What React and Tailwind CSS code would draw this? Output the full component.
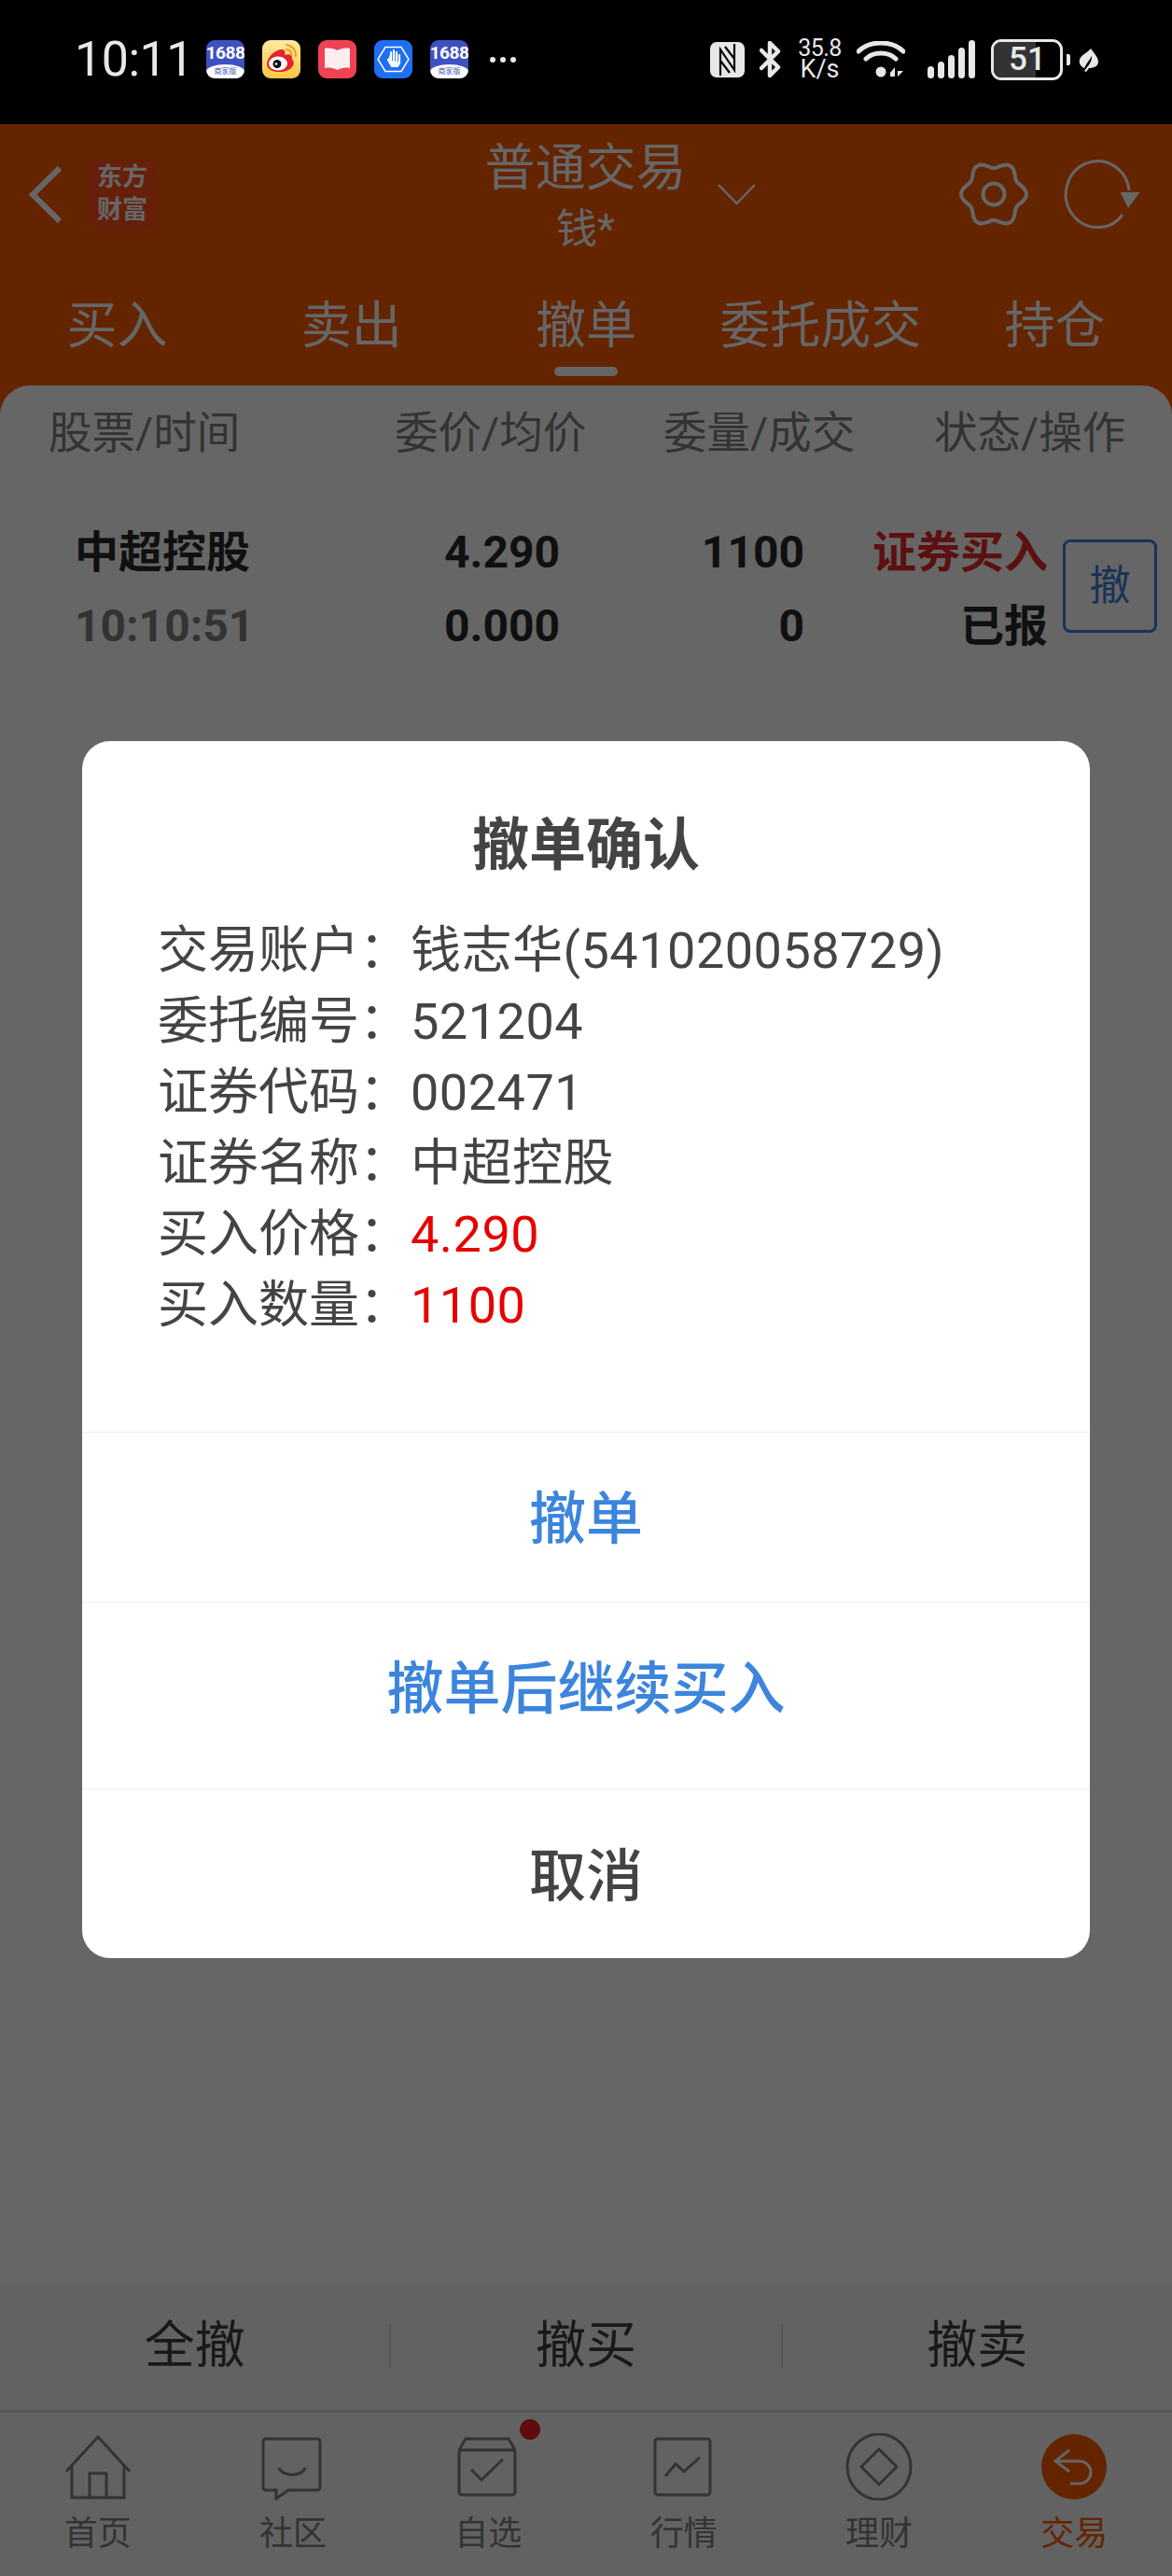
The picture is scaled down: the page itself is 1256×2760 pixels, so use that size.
import React from 'react'

const tabs = ['买入', '卖出', '撤单', '委托成交', '持仓']

const details = [
  { label: '交易账户：', value: '钱志华(541020058729)' },
  { label: '委托编号：', value: '521204' },
  { label: '证券代码：', value: '002471' },
  { label: '证券名称：', value: '中超控股' },
  { label: '买入价格：', value: '4.290', red: true },
  { label: '买入数量：', value: '1100', red: true },
]

const gearPath = () => {
  const pts = []
  for (let i = 0; i < 120; i++) {
    const t = (i / 120) * Math.PI * 2
    const r = 31.5 + 3.5 * Math.cos(6 * t)
    pts.push(`${(38 + r * Math.cos(t)).toFixed(1)} ${(36 + r * Math.sin(t)).toFixed(1)}`)
  }
  return `M${pts.join('L')}Z`
}

const Icon1688 = () => (
  <div className="relative w-[41px] h-[41px] rounded-[9px] overflow-hidden bg-[#3f51c0] flex flex-col items-center">
    <span className="text-white text-[19px] font-bold leading-[20px] mt-[4px] tracking-[-0.5px]">1688</span>
    <div className="absolute left-0 right-0 bottom-0 h-[15px] bg-white rounded-t-[50%] flex justify-center">
      <span className="text-[#3f51c0] text-[8px] leading-[15px]">商家版</span>
    </div>
  </div>
)

const IconWeibo = () => (
  <svg width="41" height="41" viewBox="0 0 41 41">
    <defs>
      <linearGradient id="wb" x1="0" y1="0" x2="0" y2="1">
        <stop offset="0" stopColor="#ffeaa0" />
        <stop offset="1" stopColor="#ffc640" />
      </linearGradient>
    </defs>
    <rect width="41" height="41" rx="9" fill="url(#wb)" />
    <path d="M5 26 C5 18 14 10 21 10 C25 10 25 14 24 16 C29 14 33 16 32 21 C36 23 34 33 20 34 C11 34.500 5 31 5 26Z" fill="#e6202c" />
    <ellipse cx="17" cy="25" rx="10" ry="7.500" fill="#fff" />
    <circle cx="16" cy="25.500" r="4.500" fill="#111" />
    <circle cx="15" cy="25.500" r="1.300" fill="#fff" />
    <path d="M26 5 C32 6 36 10 36 17 M26 10 C29 10 31 12 31.500 16" fill="none" stroke="#f09a1a" strokeWidth="2" strokeLinecap="round" />
  </svg>
)

const IconBook = () => (
  <svg width="41" height="41" viewBox="0 0 41 41">
    <rect width="41" height="41" rx="9" fill="#ef4354" />
    <path d="M7 9 C12 8 17 9 20.500 11 C24 9 29 8 34 9 V30 C29 29 24 30 20.500 32 C17 30 12 29 7 30Z" fill="#ffeef0" />
  </svg>
)

const IconHand = () => (
  <svg width="41" height="41" viewBox="0 0 41 41">
    <rect width="41" height="41" rx="9" fill="#1f6ff2" />
    <path d="M12 7.500 H29 L37 20.500 L29 33.500 H12 L4 20.500Z" fill="none" stroke="#fff" strokeWidth="1.500" />
    <path d="M15 21 L18 24 V13 M21 27 V11 M24 13 V24 M24 15 M27 16 V25 M15 21 L19 28 H25 L27 24" fill="#fff" stroke="#fff" strokeWidth="2.200" strokeLinecap="round" strokeLinejoin="round" />
  </svg>
)

const StatusRight = () => (
  <div className="flex items-center h-full text-[#e8e8e8]">
    <svg width="37" height="38" viewBox="0 0 37 38" className="mt-[-6px]">
      <rect width="37" height="38" rx="7" fill="currentColor" />
      <path d="M11 36 V8 L26 30 V2 M16 5 L26 18 M11 20 L21 33" stroke="#000" strokeWidth="2.200" fill="none" />
    </svg>
    <svg width="25" height="39" viewBox="0 0 25 39" className="ml-[16px] mt-[-6px]">
      <path d="M2 10 L20 28 L11 37 V2 L20 11 L2 29" fill="none" stroke="currentColor" strokeWidth="4.500" strokeLinejoin="round" strokeLinecap="round" />
    </svg>
    <div className="ml-[14px] w-[51px] mt-[-6px] flex flex-col items-center">
      <span className="text-[25px] leading-[20px] tracking-[-0.5px]">35.8</span>
      <span className="text-[27px] leading-[24px]">K/s</span>
    </div>
    <svg width="52" height="39" viewBox="0 0 52 39" className="ml-[14px] mt-[-6px]">
      <path d="M2 11 C14 -1 38 -1 50 11 M10 19 C18 11 34 11 42 19" fill="none" stroke="currentColor" strokeWidth="5" strokeLinecap="round" />
      <circle cx="26" cy="33" r="5.500" fill="currentColor" />
      <path d="M36 34 L41 28 V38 H36Z M44 28 V38 L50 32 H44Z" fill="currentColor" />
    </svg>
    <svg width="51" height="41" viewBox="0 0 51 41" className="ml-[24px] mt-[-6px]">
      <rect x="0" y="28" width="7" height="13" rx="3.500" fill="currentColor" />
      <rect x="11" y="23" width="7" height="18" rx="3.500" fill="currentColor" />
      <rect x="22" y="16" width="7" height="25" rx="3.500" fill="currentColor" />
      <rect x="33" y="8" width="7" height="33" rx="3.500" fill="currentColor" />
      <rect x="44" y="0" width="7" height="41" rx="3.500" fill="currentColor" />
    </svg>
    <div className="ml-[17px] mt-[-6px] relative w-[77px] h-[44px] rounded-[11px] border-[3px] border-[#e8e8e8] overflow-hidden flex items-center justify-center">
      <div className="absolute left-0 top-0 bottom-0 w-[45px] bg-[#333333]" />
      <span className="relative text-[35px] font-medium leading-none ml-[1px] text-[#e8e8e8]">51</span>
    </div>
    <div className="ml-[4px] mt-[-6px] w-[4px] h-[12px] rounded-r-[2px] bg-[#e8e8e8]" />
    <svg width="21" height="25" viewBox="0 0 21 25" className="ml-[9px] mt-[-4px]">
      <path d="M13 0 C16 5 21 9 21 14 C21 19 16 21 11 21 L8 25 L6 24 L9 20 C14 14 14 11 14 8 C12 12 8 16 6 21 C2 19 0 16 1 12 C2 7 9 5 13 0Z" fill="currentColor" />
    </svg>
  </div>
)

const StatusBar = () => (
  <div className="relative z-20 h-[133px] bg-black flex items-center justify-between pl-[80px] pr-[79px]">
    <div className="flex items-center h-full">
      <span className="text-[#e8e8e8] text-[52px] leading-none w-[141px] mt-[-6px] tracking-[-0.5px]">10:11</span>
      <div className="flex gap-[19px] mt-[-6px]">
        <Icon1688 />
        <IconWeibo />
        <IconBook />
        <IconHand />
        <Icon1688 />
      </div>
      <div className="flex gap-[5px] ml-[23px] mt-[-6px]">
        <span className="w-[6px] h-[6px] rounded-full bg-[#e8e8e8]" />
        <span className="w-[6px] h-[6px] rounded-full bg-[#e8e8e8]" />
        <span className="w-[6px] h-[6px] rounded-full bg-[#e8e8e8]" />
      </div>
    </div>
    <StatusRight />
  </div>
)

const Header = () => (
  <div className="bg-[#fa5a00] h-[296px] text-white">
    <div className="h-[150px] flex items-center">
      <svg width="37" height="63" viewBox="0 0 37 63" className="ml-[30px]">
        <path d="M34 3 L5 31.500 L34 60" fill="none" stroke="currentColor" strokeWidth="6" />
      </svg>
      <div className="ml-[27px] w-[74px] h-[75px] rounded-[12px] bg-[#ff4f19] flex flex-col items-center justify-center font-bold text-[27px] leading-[35px]">
        <span>东方</span>
        <span>财富</span>
      </div>
      <div className="ml-[356px] w-[207px] mt-[12px] flex flex-col items-center">
        <span className="text-[54px] leading-[64px] whitespace-nowrap">普通交易</span>
        <span className="text-[44px] leading-[66px]">钱*</span>
      </div>
      <svg width="41" height="22" viewBox="0 0 41 22" className="ml-[38px]">
        <path d="M1 1 L20.500 21 L40 1" fill="none" stroke="currentColor" strokeWidth="2.500" />
      </svg>
      <svg width="76" height="72" viewBox="0 0 76 72" className="ml-[217px]">
        <path d={gearPath()} fill="none" stroke="currentColor" strokeWidth="4" />
        <circle cx="38" cy="36" r="11.500" fill="none" stroke="currentColor" strokeWidth="4" />
      </svg>
      <svg width="84" height="76" viewBox="0 0 84 76" className="ml-[37px]">
        <path d="M63 60 A34 35.500 0 1 1 70 34" fill="none" stroke="currentColor" strokeWidth="3" />
        <path d="M60.500 36 H81.500 L69 53Z" fill="currentColor" />
      </svg>
    </div>
    <div className="grid grid-cols-5 pt-[33px]">
      {tabs.map((t, i) => (
        <div key={t} className="flex flex-col items-center">
          <span className="text-[54px] leading-[68px]">{t}</span>
          {i === 2 && <span className="mt-[9px] w-[68px] h-[10px] rounded-full bg-white" />}
        </div>
      ))}
    </div>
  </div>
)

const OrderTable = () => (
  <>
    <div className="flex pt-[27px] pl-[52px] text-[46.500px] leading-[48px] text-[#808080] whitespace-nowrap">
      <span className="w-[371px]">股票/时间</span>
      <span className="w-[288px]">委价/均价</span>
      <span className="w-[290px]">委量/成交</span>
      <span>状态/操作</span>
    </div>
    <div className="mt-[64px] ml-[80px] grid grid-cols-[300px_220px_262px_261px_117px] text-[47px] leading-[79px] font-bold text-[#2a2a2a]">
      <span>中超控股</span>
      <span className="text-right text-[48px]">4.290</span>
      <span className="text-right text-[48px]">1100</span>
      <span className="text-right text-[#e62a2a]">证券买入</span>
      <div className="row-span-2 pl-[16px] self-center mb-[6px]">
        <div className="w-[101px] h-[100px] rounded-[8px] border-[3px] border-[#3b7fd6] flex items-center justify-center text-[#3b7fd6] text-[44px] font-normal">撤</div>
      </div>
      <span className="text-[#808080] text-[48px]">10:10:51</span>
      <span className="text-right text-[48px]">0.000</span>
      <span className="text-right text-[48px]">0</span>
      <span className="text-right">已报</span>
    </div>
  </>
)

const ActionBar = () => (
  <div className="h-[137px] bg-[#f5f5f5] flex items-center text-[54px] text-[#404040]">
    <div className="flex-1 text-center">全撤</div>
    <div className="w-[2px] h-[47px] bg-[#d8d8d8]" />
    <div className="flex-1 text-center">撤买</div>
    <div className="w-[2px] h-[47px] bg-[#d8d8d8]" />
    <div className="flex-1 text-center">撤卖</div>
  </div>
)

const NavIcon = ({ children }) => (
  <svg width="72" height="72" viewBox="0 0 72 72" fill="none" stroke="#808080" strokeWidth="3">
    {children}
  </svg>
)

const navItems = [
  {
    label: '首页',
    icon: <path d="M2 41 L36 4 L70 41 M8 34 V69 H64 V34 M27 69 V43 H45 V69" />,
  },
  {
    label: '社区',
    icon: (
      <>
        <path d="M7 6 H62 A3 3 0 0 1 65 9 V58 A3 3 0 0 1 62 61 H31 L18 70 V61 H7 A3 3 0 0 1 4 58 V9 A3 3 0 0 1 7 6Z" />
        <path d="M21 37 C24 47 46 47 49 37" />
      </>
    ),
  },
  {
    label: '自选',
    dot: true,
    icon: (
      <>
        <path d="M5 18 L12 6 H58 L65 18" />
        <rect x="5" y="18" width="60" height="48" rx="3" />
        <path d="M18 39 L29 50 L52 28" />
      </>
    ),
  },
  {
    label: '行情',
    icon: (
      <>
        <rect x="5" y="6" width="59" height="60" rx="3" />
        <path d="M16 46 L27 33 L36 41 L53 26" />
      </>
    ),
  },
  {
    label: '理财',
    icon: (
      <>
        <ellipse cx="36" cy="36" rx="34" ry="35" />
        <path d="M36 17 L55 36 L36 55 L17 36Z" strokeLinejoin="round" />
      </>
    ),
  },
  {
    label: '交易',
    active: true,
    icon: (
      <>
        <circle cx="36" cy="36" r="35" fill="#fa5a00" stroke="none" />
        <path d="M31 18 L16 30 L31 41 M16 30 H42 A12 12 0 0 1 42 54 H32" stroke="#ffffff" />
      </>
    ),
  },
]

const BottomNav = () => (
  <div className="flex-1 bg-[#f5f5f5] border-t-[3px] border-[#dadada] grid grid-cols-6 pt-[22px]">
    {navItems.map(item => (
      <div key={item.label} className="relative flex flex-col items-center">
        <NavIcon>{item.icon}</NavIcon>
        {item.dot && <span className="absolute left-[138px] top-[-15px] w-[22px] h-[22px] rounded-full bg-[#f02020]" />}
        <span className={`mt-[14px] text-[36px] leading-[44px] ${item.active ? 'text-[#fa5a00]' : 'text-[#808080]'}`}>{item.label}</span>
      </div>
    ))}
  </div>
)

const ConfirmDialog = () => (
  <div className="w-[1080px] h-[1304px] bg-white rounded-[30px] overflow-hidden text-[#444444]">
    <div className="pt-[76px] text-center text-[61px] leading-[72px] font-bold">撤单确认</div>
    <div className="mt-[39px] pl-[81px] pb-[97px] text-[54px] leading-[76px] whitespace-nowrap">
      {details.map(d => (
        <div key={d.label} className="flex">
          <span className="w-[271px]">{d.label}</span>
          <span className={`tracking-[0.5px] ${d.red ? 'text-[#e60000]' : ''}`}>{d.value}</span>
        </div>
      ))}
    </div>
    <div className="h-[182px] border-t border-[#eeeeee] pt-[6px] flex items-center justify-center text-[61px] font-medium text-[#3b85dc]">撤单</div>
    <div className="h-[200px] border-t border-[#eeeeee] pb-[11px] flex items-center justify-center text-[61px] font-medium text-[#3b85dc]">撤单后继续买入</div>
    <div className="h-[182px] border-t border-[#eeeeee] pt-[8px] flex items-center justify-center text-[61px] font-medium">取消</div>
  </div>
)

export default function App() {
  return (
    <div className="relative w-[1256px] h-[2760px] overflow-hidden flex flex-col bg-[#fa5a00] [font-family:Roboto,'Noto_Sans_CJK_SC',sans-serif]">
      <StatusBar />
      <Header />
      <div className="relative mt-[-16px] flex-1 bg-white rounded-t-[32px] flex flex-col">
        <div className="flex-1">
          <OrderTable />
        </div>
        <ActionBar />
        <div className="h-[178px] flex">
          <BottomNav />
        </div>
      </div>
      <div className="absolute left-0 right-0 top-[133px] bottom-0 z-10 bg-black/60 flex justify-center pt-[661px]">
        <ConfirmDialog />
      </div>
    </div>
  )
}
